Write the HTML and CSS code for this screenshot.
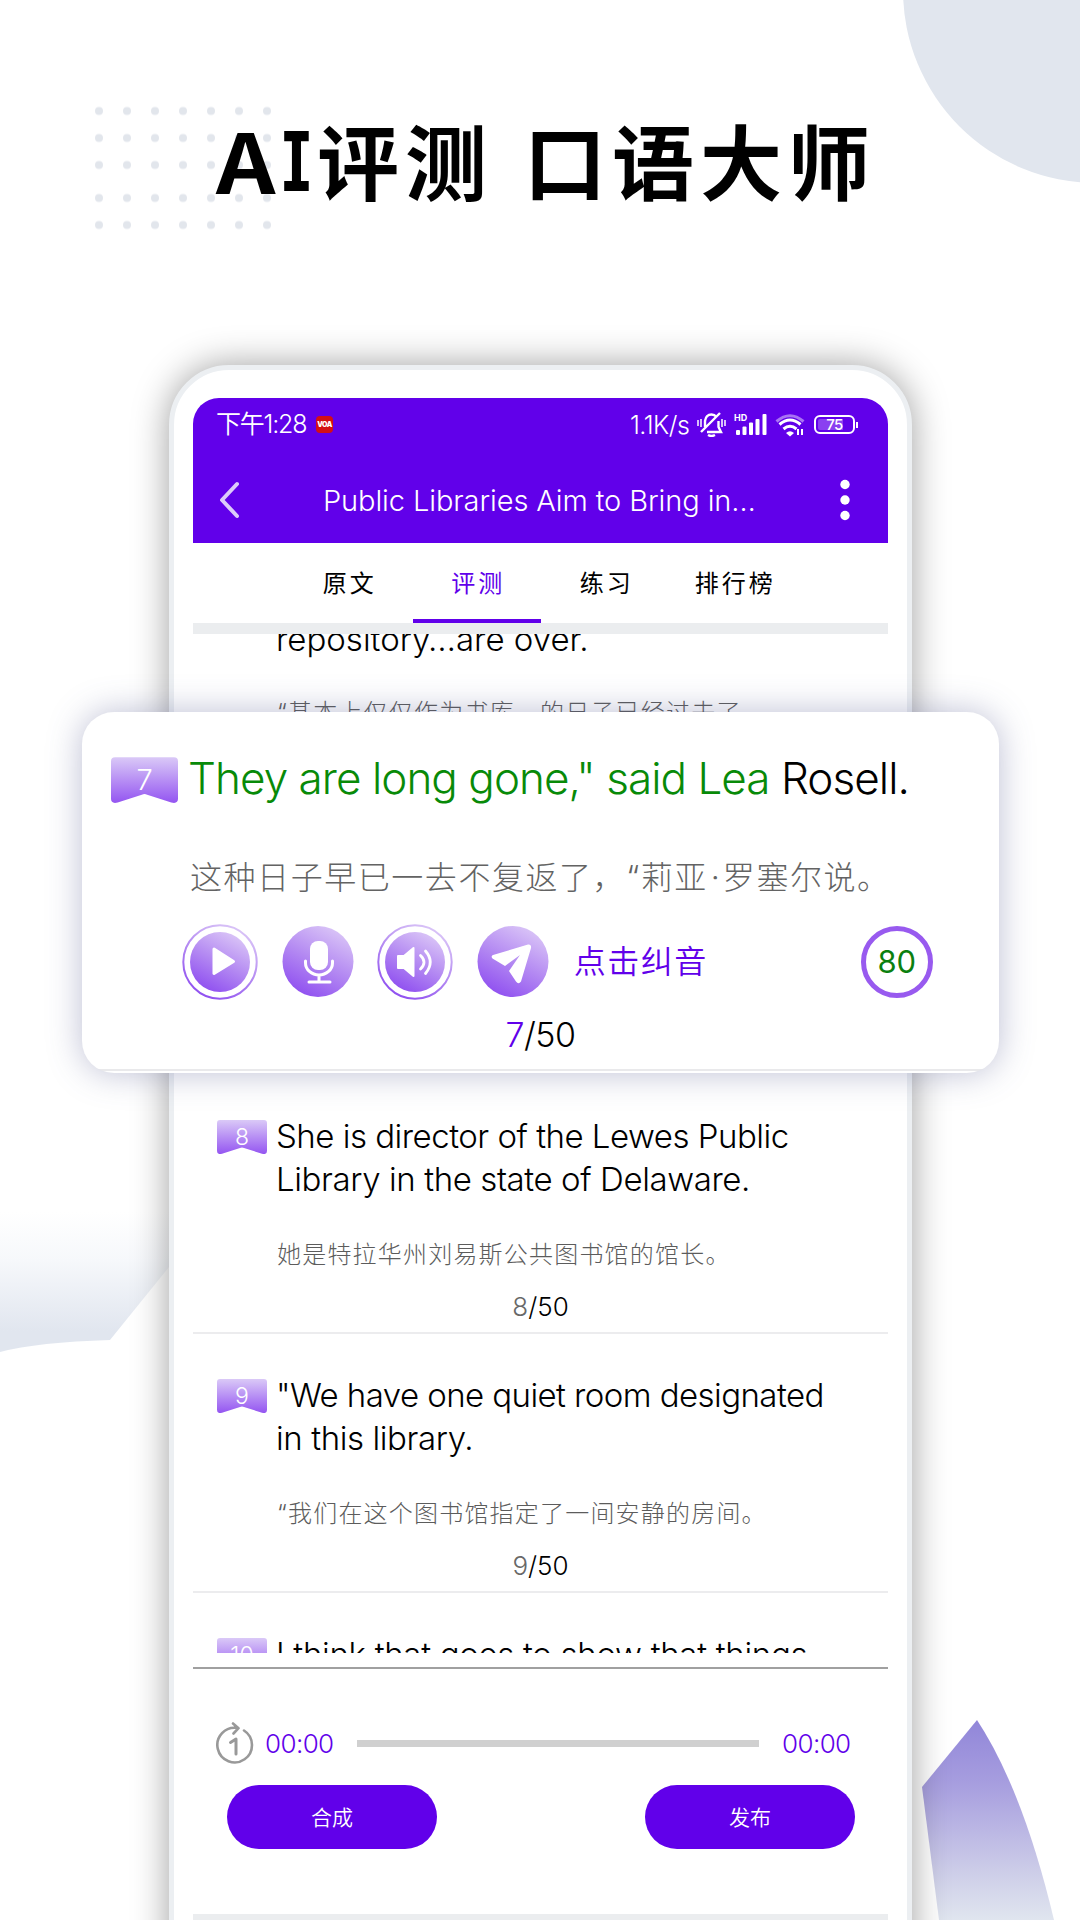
FILE: index.html
```
<!DOCTYPE html>
<html lang="zh-CN">
<head>
<meta charset="utf-8">
<title>AI评测 口语大师</title>
<link rel="stylesheet" href="styles.css">
</head>
<body>
<svg class="backdrop" viewBox="0 0 1080 1920" aria-hidden="true">
  <defs>
    <linearGradient id="mist" gradientUnits="userSpaceOnUse" x1="0" y1="1212" x2="0" y2="1352">
      <stop offset="0" stop-color="#fff"/><stop offset=".35" stop-color="#f6f8fb"/><stop offset=".85" stop-color="#e1e6ef"/><stop offset="1" stop-color="#e1e6ef"/>
    </linearGradient>
    <linearGradient id="shard" gradientUnits="userSpaceOnUse" x1="0" y1="1720" x2="0" y2="1920">
      <stop offset="0" stop-color="#9186d9"/><stop offset=".32" stop-color="#a79edf"/><stop offset=".75" stop-color="#cccce8"/><stop offset="1" stop-color="#e0e5ef"/>
    </linearGradient>
    <pattern id="dots" width="28" height="27" patternUnits="userSpaceOnUse" x="85" y="97.500"><circle cx="14" cy="13.500" r="4" fill="#e2e6ec"/></pattern>
  </defs>
  <circle cx="1096" cy="-10" r="193" fill="#e1e6ee"/>
  <rect x="85" y="97.500" width="196" height="81" fill="url(#dots)"/>
  <rect x="85" y="97.500" width="196" height="54" fill="url(#dots)" transform="translate(0 87)"/>
  <path d="M0 1212H169V1267L110 1340Q38 1342 0 1352Z" fill="url(#mist)"/>
  <path d="M977 1720L922 1787 939 1920H1054Q1023 1790 977 1720Z" fill="url(#shard)"/>
</svg>
<svg class="defs" aria-hidden="true">
  <defs>
    <linearGradient id="ribbon" x1="0" y1="0" x2="0" y2="1"><stop offset="0" stop-color="#dac9f7"/><stop offset="1" stop-color="#9455f1"/></linearGradient>
    <linearGradient id="orb" x1=".8" y1=".05" x2=".3" y2="1"><stop offset="0" stop-color="#dac5f7"/><stop offset=".5" stop-color="#b48af2"/><stop offset="1" stop-color="#8f4ff0"/></linearGradient>
    <symbol id="flag" viewBox="0 0 50 34"><path d="M3 0H47Q50 0 50 3V31Q50 35 45 33.800L27 28Q25 27 23 28L5 33.800Q0 35 0 31V3Q0 0 3 0Z" fill="url(#ribbon)"/></symbol>
  </defs>
</svg>

<h1 class="headline"><span class="latin-a">A</span><span class="latin-i">I</span>评测<span class="gap"></span>口语大师</h1>

<main class="phone">
  <div class="screen">
    <header class="topbar">
      <div class="status">
        <span class="clock">下午1:28</span>
        <span class="voa">VOA</span>
        <span class="speed">1.1K/s</span>
        <svg class="mute" viewBox="0 0 29 25" fill="none" stroke="#fff" stroke-width="2.400"><path d="M8 15V9Q9 2.500 14.500 2.500 17.500 2.500 19.500 5M21.500 9V15L24 20H10M4 20L23 1"/><path d="M11 23q3.500 2 7 0" /><path d="M1 8v6M4 7v8M25 7v8M28 8v6" stroke-width="1.500"/></svg>
        <svg class="signal" viewBox="0 0 33 24" fill="#fff"><text x="0" y="8" class="hd">HD</text><rect x="2" y="17" width="4" height="5" rx="1"/><rect x="8.500" y="13.500" width="4" height="8.500" rx="1"/><rect x="15" y="9.500" width="4" height="12.500" rx="1"/><rect x="21.500" y="6" width="4" height="16" rx="1"/><rect x="28.500" y="1" width="4" height="21" rx="1"/></svg>
        <svg class="wifi" viewBox="0 0 30 24" fill="none" stroke="#fff" stroke-width="3"><path d="M1.500 8.500Q15-3 28.500 8.500" opacity=".45"/><path d="M4.500 11.500Q15 2.500 25.500 11.500M8.500 16Q15 10.500 21.500 16"/><path d="M11 20l4 3.500 4-3.500q-4-3.500-8 0z" fill="#fff" stroke="none"/><path d="M23 16v6M27 16v6" stroke-width="2"/></svg>
        <span class="battery"><b>75</b></span>
      </div>
      <div class="nav">
        <svg class="back" viewBox="0 0 20 38" fill="none" stroke="#dccbfa" stroke-width="4" stroke-linecap="round" stroke-linejoin="round"><path d="M18 3L3 19 18 35"/></svg>
        <span class="nav-title">Public Libraries Aim to Bring in…</span>
        <svg class="more" viewBox="0 0 10 42" fill="#fff"><circle cx="5" cy="5.500" r="4.700"/><circle cx="5" cy="21" r="4.700"/><circle cx="5" cy="36.500" r="4.700"/></svg>
      </div>
    </header>
    <nav class="tabs"><span>原文</span><span class="active">评测</span><span>练习</span><span>排行榜</span></nav>
    <section class="list">
      <article class="item first"><p class="en">repository…are over.</p><p class="zh">“基本上仅仅作为书库，的日子已经过去了</p></article>
      <article class="item">
        <div class="badge"><svg><use href="#flag"/></svg><span>8</span></div>
        <p class="en"><span class="snug">She is director of the Lewes Public</span><br><span class="close">Library in the state of Delaware.</span></p>
        <p class="zh">她是特拉华州刘易斯公共图书馆的馆长。</p>
        <p class="count"><i>8</i>/50</p>
      </article>
      <article class="item">
        <div class="badge"><svg><use href="#flag"/></svg><span>9</span></div>
        <p class="en"><span class="tight">"We have one quiet room designated</span><br><span class="close">in this library.</span></p>
        <p class="zh">“我们在这个图书馆指定了一间安静的房间。</p>
        <p class="count"><i>9</i>/50</p>
      </article>
      <article class="item last">
        <div class="badge"><svg><use href="#flag"/></svg><span>10</span></div>
        <p class="en"><span class="near">I think that goes to show that things</span></p>
      </article>
    </section>
    <footer class="player">
      <div class="track">
        <svg class="loop" viewBox="0 0 38 42" fill="none" stroke="#999" stroke-width="2.600" stroke-linecap="round" stroke-linejoin="round"><path d="M28 8.500A17.300 17.300 0 1 1 21.500 6M17 1.500L22.500 6.200 17.500 11.500"/><path d="M14.500 20.500L20 17V32" stroke-width="3"/></svg>
        <span class="time">00:00</span><span class="rail"></span><span class="time">00:00</span>
      </div>
      <div class="actions"><button>合成</button><button>发布</button></div>
    </footer>
    <div class="floor"></div>
  </div>
</main>

<section class="card">
  <div class="card-head">
    <div class="badge big"><svg><use href="#flag"/></svg><span>7</span></div>
    <p class="sentence"><em>They are long gone," said Lea</em> Rosell.</p>
  </div>
  <p class="card-zh">这种日子早已一去不复返了，“莉亚<span class="mid">·</span>罗塞尔说。</p>
  <div class="tools">
    <svg viewBox="0 0 76 76"><circle cx="38" cy="38" r="36.700" fill="none" stroke="url(#orb)" stroke-width="2"/><circle cx="38" cy="38" r="30" fill="url(#orb)"/><path d="M32 25L51.500 37.500 32 49.500Z" fill="#fff" stroke="#fff" stroke-width="3" stroke-linejoin="round"/></svg>
    <svg viewBox="0 0 76 76"><circle cx="38" cy="37.500" r="35.500" fill="url(#orb)"/><rect x="30" y="17" width="18" height="29" rx="8" fill="#fff"/><path d="M25.500 37v2a13.500 12 0 0 0 27 0v-2M39 51v7M29 58h21" fill="none" stroke="#fff" stroke-width="3" stroke-linecap="round"/></svg>
    <svg viewBox="0 0 76 76"><circle cx="38" cy="38" r="36.700" fill="none" stroke="url(#orb)" stroke-width="2"/><circle cx="38" cy="38" r="30" fill="url(#orb)"/><path d="M21 32h6L36.500 24V52L27 44H21Z" fill="#fff" stroke="#fff" stroke-width="2" stroke-linejoin="round"/><path d="M43.500 31.500Q50.500 38 43.500 45M48.500 27Q58 38 48.500 49.500" fill="none" stroke="#fff" stroke-width="2.800" stroke-linecap="round"/></svg>
    <svg viewBox="0 0 76 76"><circle cx="38" cy="37.500" r="35.500" fill="url(#orb)"/><path d="M18 31L53 20.500Q56.500 20 56 24L46 57.500Q43.500 61 41 57.500L34 47 45 31 30 42 17.500 34.500Q15.500 32.500 18 31Z" fill="#fff"/></svg>
    <span class="hint">点击纠音</span>
    <span class="score">80</span>
  </div>
  <p class="card-count"><i>7</i>/50</p>
</section>
</body>
</html>
```
FILE: styles.css
```
* { box-sizing: border-box; }
body { margin: 0; width: 1080px; height: 1920px; overflow: hidden; position: relative; background: #fff; color: #000; font-family: Inter, "Noto Sans CJK SC", sans-serif; font-weight: 300; }
p, h1 { margin: 0; }
i, em { font-style: normal; }
svg { display: block; }
.backdrop { position: absolute; inset: 0; width: 1080px; height: 1920px; z-index: -1; }
.defs { position: absolute; width: 0; height: 0; }

.headline { height: 365px; padding: 99px 0 0 216px; display: flex; align-items: flex-start; font: 700 82px/120px "Noto Sans CJK SC", sans-serif; letter-spacing: 6px; white-space: nowrap; }
.latin-a { width: 66px; letter-spacing: 0; transform: scaleX(1.130); transform-origin: left; }
.latin-i { width: 34px; margin: 3px 1px 0 0; letter-spacing: 0; font-family: Inter, sans-serif; font-feature-settings: "cv08"; transform: scaleX(.74); transform-origin: left; }
.gap { width: 31px; }

.phone { width: 743px; height: 1600px; margin-left: 169px; padding: 28px 19px 0; border: 5px solid #eceff2; border-radius: 60px 60px 0 0; background: #fff; box-shadow: 0 0 36px rgba(0,0,0,.38); }
.screen { width: 695px; border-radius: 26px 26px 0 0; overflow: hidden; }
.topbar { height: 145px; background: #6100ea; color: #fff; }
.status { height: 53px; padding: 0 28px 0 23px; display: flex; align-items: center; font-size: 25px; font-weight: 400; }
.clock { width: 91px; white-space: nowrap; letter-spacing: -1.200px; line-height: 32px; margin-top: -1px; font-weight: 350; }
.voa { width: 17px; height: 17px; margin-left: 9px; border-radius: 4px; background: #d40f14; font: 900 7px/17px Inter, sans-serif; letter-spacing: -.5px; text-align: center; }
.speed { width: 67px; margin-left: auto; letter-spacing: -.5px; font-weight: 350; }
.mute { width: 29px; height: 25px; }
.signal { width: 33px; height: 24px; margin-left: 8px; }
.hd { font: 700 9px Inter, sans-serif; }
.wifi { width: 30px; height: 24px; margin-left: 8px; }
.battery { position: relative; width: 41px; height: 19px; margin-left: 9px; margin-right: 5px; border: 2px solid #fff; border-radius: 6px; padding: 2px; }
.battery b { display: block; height: 11px; border-radius: 2px; background: linear-gradient(90deg, #8a40f0 75%, transparent 75%); font: 500 15px/12px Inter, sans-serif; letter-spacing: -.5px; text-align: center; }
.battery::after { content: ""; position: absolute; right: -5px; top: 5px; width: 2px; height: 6px; background: #fff; }
.nav { height: 92px; padding: 6px 38px 0 26px; display: flex; align-items: center; justify-content: space-between; }
.back { width: 20px; height: 38px; margin-bottom: 1px; }
.nav-title { width: 433px; font-size: 29px; letter-spacing: -.1px; white-space: nowrap; }
.more { width: 10px; height: 42px; }
.tabs { height: 91px; border-bottom: 11px solid #ebedef; padding: 0 90px 0 91px; display: grid; grid-template-columns: repeat(4, 128.500px); font: 400 24px/78px "Noto Sans CJK SC", sans-serif; letter-spacing: 3px; text-align: center; }
.tabs span { padding-left: 3px; height: 80px; }
.tabs .active { color: #6100ea; border-bottom: 4px solid #6100ea; }

.list { height: 1019px; overflow: hidden; }
.item { height: 259px; position: relative; padding: 40px 0 0 83px; border-bottom: 2px solid #ececee; font-size: 33px; }
.item.first { height: 440px; padding-top: 0; margin-top: -16px; }
.item.first .zh { margin-top: 34px; }
.item.first + .item { margin-top: 17px; }
.item.last { border: 0; }
.en { line-height: 43px; white-space: nowrap; }
.snug { letter-spacing: -.5px; }
.close { letter-spacing: -.4px; }
.tight { letter-spacing: -.57px; }
.near { letter-spacing: -.3px; }
.zh { margin-top: 36px; padding-left: 1px; font-size: 24px; line-height: 36px; letter-spacing: 1.200px; color: #5c5c5c; white-space: nowrap; }
.count { margin-top: 17px; text-align: center; margin-left: -83px; font-size: 26px; line-height: 34px; }
.count i { color: #686868; }
.badge { position: absolute; left: 24px; top: 45px; width: 50px; height: 34px; color: #fff; font-size: 23px; line-height: 34px; text-align: center; }
.badge svg { position: absolute; inset: 0; width: 100%; height: 100%; }
.badge span { position: relative; }

.player { margin-top: 14px; height: 247px; border-top: 2px solid #a0a0a0; padding: 53px 33px 0 23px; }
.track { display: flex; align-items: center; height: 42px; }
.loop { width: 38px; height: 42px; }
.time { width: 70px; margin-left: 11px; color: #6100ea; font-size: 26px; letter-spacing: -.6px; }
.rail { width: 402px; height: 7px; margin: 0 12px 0 22px; background: #d0d0d0; }
.actions { display: flex; justify-content: space-between; margin: 21px 0 0 11px; }
.actions button { width: 210px; height: 64px; padding: 0 0 2px; border: 0; border-radius: 32px; background: #6100ea; color: #fff; font: 350 21px "Noto Sans CJK SC", sans-serif; }
.floor { height: 10px; background: #ebedef; }

.card { position: absolute; left: 82px; top: 712px; width: 917px; height: 361px; border-radius: 32px; background: linear-gradient(#e9e9eb, #e9e9eb) 0 357px / 100% 2px no-repeat #fff; box-shadow: 0 0 34px rgba(80,84,140,.38); }
.card-head { display: flex; padding: 35px 0 0 29px; height: 110px; }
.badge.big { position: relative; left: 0; top: 10px; width: 67px; height: 46px; font-size: 29px; line-height: 46px; }
.sentence { margin-left: 10px; font-size: 44px; line-height: 63px; letter-spacing: -.950px; white-space: nowrap; }
.sentence em { color: #088a08; }
.card-zh { padding: 32px 0 0 108px; height: 102px; font-size: 32px; line-height: 48px; letter-spacing: 1.550px; color: #636363; white-space: nowrap; }
.mid { display: inline-block; width: 15px; text-align: center; letter-spacing: 0; }
.tools { height: 76px; padding-left: 100px; display: grid; grid-template-columns: 97.600px 97.600px 97.600px 98px 281px 80px; align-items: center; }
.tools svg { width: 76px; height: 76px; }
.hint { padding-left: 1px; margin-top: -6px; color: #6100ea; font-size: 32px; font-weight: 350; letter-spacing: 1.500px; }
.score { width: 72px; height: 72px; margin: -1px 0 0 7px; border: 5px solid #985aef; border-radius: 50%; color: #0b800f; font-size: 31px; font-weight: 400; line-height: 62px; text-align: center; }
.card-count { font-size: 34px; line-height: 44px; margin-top: 13px; text-align: center; letter-spacing: -.5px; }
.card-count i { color: #6100ea; }
```
